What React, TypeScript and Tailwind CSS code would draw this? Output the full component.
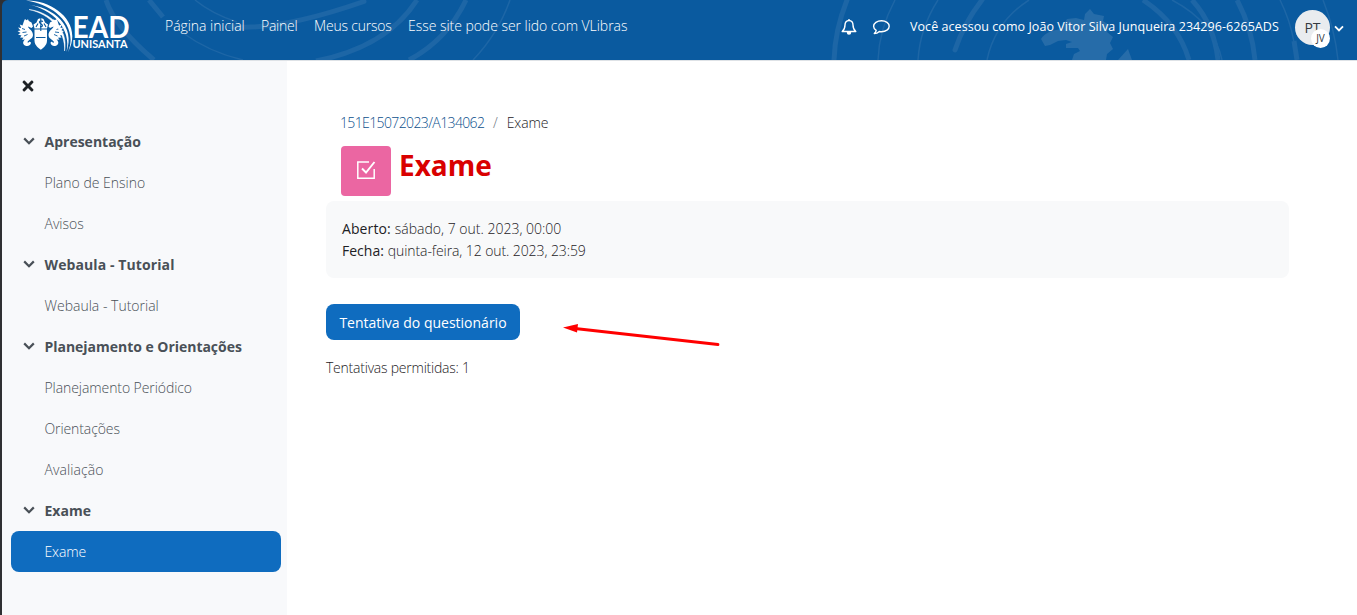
import type { ReactNode } from 'react';
import { FaTimes } from 'react-icons/fa';

function Chevron({ className }: { className: string }) {
  return (
    <svg viewBox="0 0 12 8" className={className} fill="none" stroke="currentColor" strokeWidth="2.2">
      <path d="M1.2 1.4 6 6.2l4.800-4.800" />
    </svg>
  );
}

function Seahorse() {
  return (
    <g>
      <path
        d="M22 21l1-2 1.500 1.200 1.500-1 .8 1.800 2.700 1.500 1.500 4-1.500 1.500-3.500-1.500c0 2 5 4 5 8.500 0 4-4.500 4.500-5.500 7 0 1 1.500 1 2-.5l1.500 1c0 3-3 4-5.500 3.200-3-1-3-4.200-.5-6.200l-3 .3 1.500-2-3.500-.3 1.500-2-3.500-1 2.500-1.500-3-2 3-.5-2.500-3 3.200.5-1.500-3.500 2.800 1z"
        fill="#fff"
      />
      <path d="M20 28.500l3 1M20.500 32.500l4-.5M22 36l3.500-1.500" stroke="#0a5a9f" strokeWidth=".9" />
    </g>
  );
}

function Logo() {
  return (
    <svg viewBox="0 0 130 60" className="h-[60px] w-[130px] shrink-0">
      <Seahorse />
      <g transform="translate(77.500 0) scale(-1 1)">
        <Seahorse />
      </g>
      <path d="M32.500 29.500h12.500v11c0 4-2.500 6.500-6.200 9.200-3.800-2.700-6.300-5.200-6.300-9.200z" fill="#fff" />
      <path d="M34 37.500h9.500" stroke="#0a5a9f" strokeWidth="1" />
      <path d="M32.500 28.500l-1-4 3-2 1.500-3.500 3-1 2.500 1 1.500 3.500 3 2-1 4z" fill="#fff" />
      <path d="M38.800 18v13M41 21.500c-3-1.500-5 .5-2.500 2s3 3-.5 3.500M34 27l2-3.500M44 27l-2-3.500" fill="none" stroke="#0a5a9f" strokeWidth="1.100" />
      <path d="M24 .5C50-.5 82 22 66 52 77 25 51 4 24 .5z" fill="#fff" />
      <path d="M25 4.500C52 7 74 26 64.500 52 70 29 50 8 25 4.500z" fill="#fff" />
      <path d="M27 9.500C48 12 67 29 62.500 51 64 31 48 14 27 9.500z" fill="#fff" stroke="#fff" strokeWidth=".5" />
      <text x="70.500" y="38" textLength="57" lengthAdjust="spacingAndGlyphs" className="fill-white font-['Lato'] text-[31px] font-bold">EAD</text>
      <text x="70.500" y="47.500" textLength="55" lengthAdjust="spacingAndGlyphs" className="fill-white font-['Lato'] text-[10.5px] font-bold">UNISANTA</text>
    </svg>
  );
}

function HeaderPattern() {
  return (
    <svg viewBox="0 0 1355 60" className="absolute inset-0 h-full w-full" fill="none" stroke="#1d66a6">
      <path d="M104 0q8 26 48 60M147 0l14 17" strokeWidth="5" />
      <path d="M228 26.500q48 5 134-25" strokeWidth="5" strokeLinecap="round" />
      <path d="M193 0q17 14 42 22M181 33q26 19 60 27" strokeWidth="1.500" />
      <path d="M415 0q-30 47-101 61M464 0q-19 40-57 60" strokeWidth="5" />
      <path d="M508 0q-12 34-37 60" strokeWidth="1.500" />
      <path d="M845 0q-12 30-13 60M980 0q-18 23-27 50" strokeWidth="5" strokeLinecap="round" />
      <path d="M893 0q-16 30-17 60M936 0q-18 28-20 60M1027 0q-34 22-42 60" strokeWidth="1.500" />
      <path d="M1141 0q35 23 46 60M1190 0q22 24 26 60M1235 0q15 28 18 60" strokeWidth="5" />
      <path d="M1170 0q42 22 50 60M1278 0q10 20 14 42M1321 0q12 30 15 60" strokeWidth="1.500" />
      <path d="M1292 41l3 19" strokeWidth="5" />
      <path d="M1039 39q3-5 10-8l10-2 6-10 9-1 8 2 1-6 5-5 4 5 10 2-1 5 6 4-2 7 6 5-3 6 3 6-6 5-1 6h-34l2-6 6-3-2-3-12 0 0-4 6-2-6-2-8 1-8 4-5 1z" fill="#266ca9" stroke="none" />
      <path d="M1116 60l10-11 4 11z" fill="#266ca9" stroke="none" />
    </svg>
  );
}

function Header() {
  return (
    <header className="relative h-[61px] shrink-0 overflow-hidden rounded-tl-md border-b border-[#dee2e6] bg-[#0a5a9f] text-white">
      <HeaderPattern />
      <div className="relative flex h-[60px] items-center">
        <Logo />
        <nav className="ml-[33px] flex -translate-y-[5px] gap-4 whitespace-nowrap text-[14px] font-[350]">
          <a className="w-[80px] tracking-[-0.05px]">Página inicial</a>
          <a className="w-[37px] tracking-[-0.25px]">Painel</a>
          <a className="w-[78px] tracking-[-0.2px]">Meus cursos</a>
          <a className="tracking-[-0.04px]">Esse site pode ser lido com VLibras</a>
        </nav>
        <div className="ml-auto flex -translate-y-[3px] items-center">
          <svg viewBox="0 0 16 16" className="h-4 w-4" fill="none" stroke="#fff" strokeWidth="1.400" strokeLinejoin="round">
            <path d="M8 1.500c-2.600 0-4 1.900-4 4.500 0 3.500-1 5-2.800 6.500h13.600C13 11 12 9.500 12 6c0-2.600-1.400-4.500-4-4.500zM8 0v1.500" />
            <path d="M6.500 13.500a1.500 1.500 0 0 0 3 0z" fill="#fff" />
          </svg>
          <svg viewBox="0 0 18 16" className="ml-[15px] h-4 w-[18px]" fill="none" stroke="#fff" strokeWidth="1.400" strokeLinejoin="round">
            <path d="M9.500 1.800C5.100 1.800 1.600 4.200 1.600 7.300c0 1.600 1 3.100 2.600 4.100-.2 1.200-.8 2.100-1.900 3.200 2.200 0 3.800-.9 5-2.100.7.100 1.400.2 2.200.2 4.400 0 7.700-2.400 7.700-5.400s-3.300-5.500-7.700-5.500z" />
          </svg>
          <span className="ml-5 w-[369px] whitespace-nowrap text-[12.5px] tracking-[0.06px]">Você acessou como João Vitor Silva Junqueira 234296-6265ADS</span>
          <div className="relative ml-4 flex h-[35px] w-[35px] items-center justify-center rounded-full bg-[#e9ecef] text-[14px] text-[#343a40]">
            PT
            <span className="absolute -bottom-[3px] right-0 flex h-[19px] w-[19px] items-center justify-center rounded-full bg-white text-[10px]">JV</span>
          </div>
          <Chevron className="ml-1 mr-[13px] h-[7px] w-[10px] translate-y-px" />
        </div>
      </div>
    </header>
  );
}

function Section({ title, children, tracking = '' }: { title: string; children: ReactNode; tracking?: string }) {
  return (
    <section>
      <div className="flex h-[41px] items-center pl-[11.5px] font-bold text-[#495057]">
        <Chevron className="mr-2.5 h-2 w-3 -translate-y-px" />
        <span className={tracking}>{title}</span>
      </div>
      {children}
    </section>
  );
}

function Item({ children, className = 'text-[#495057]' }: { children: ReactNode; className?: string }) {
  return <a className={`flex h-[41px] items-center rounded-lg pl-[33.5px] font-light ${className}`}>{children}</a>;
}

function Sidebar() {
  return (
    <aside className="w-[285px] shrink-0 bg-[#f8f9fb] pl-[9px] pr-1.5 text-[14px]">
      <div className="flex h-[60px] items-start pl-[9px] pt-[17px]">
        <FaTimes className="h-4 w-4 text-[#1d2125]" />
      </div>
      <Section title="Apresentação">
        <Item>Plano de Ensino</Item>
        <Item>Avisos</Item>
      </Section>
      <Section title="Webaula - Tutorial" tracking="tracking-[0.1px]">
        <Item>Webaula - Tutorial</Item>
      </Section>
      <Section title="Planejamento e Orientações" tracking="tracking-[-0.03px]">
        <Item className="tracking-[-0.08px] text-[#495057]">Planejamento Periódico</Item>
        <Item className="tracking-[-0.1px] text-[#495057]">Orientações</Item>
        <Item className="tracking-[0.1px] text-[#495057]">Avaliação</Item>
      </Section>
      <Section title="Exame">
        <Item className="bg-[#0f6cbf] tracking-[-0.15px] text-white">Exame</Item>
      </Section>
    </aside>
  );
}

function Main() {
  return (
    <main className="relative min-w-0 flex-1 pl-[39px] pr-[68px] pt-[50px] text-[14px] font-light text-[#1d2125]">
      <div className="flex h-[22px] items-center pl-[14px]">
        <a className="w-[144px] whitespace-nowrap tracking-[-0.62px] text-[#0b4f8c]">151E15072023/A134062</a>
        <span className="ml-[9px] mr-[9px] text-[#6c757d]">/</span>
        <span className="tracking-[-0.15px]">Exame</span>
      </div>
      <div className="mt-[13px] flex h-[50px] pl-[15px]">
        <div className="flex h-[50px] w-[50px] items-center justify-center rounded bg-[#eb66a2]">
          <svg viewBox="0 0 20 20" className="h-5 w-5 -translate-y-px" fill="none" stroke="#fff" strokeWidth="1.500">
            <path d="M13 2H1.800v16.200h16.400V9" />
            <path d="M6 8.500l4 4L18.500 2" strokeWidth="1.900" />
          </svg>
        </div>
        <h1 className="ml-2 text-[28px] font-bold leading-[38px] text-[#d90000]">Exame</h1>
      </div>
      <div className="mt-[5px] h-[77px] rounded-lg bg-[#f8f9fa] px-4 pt-[17px] leading-[22px]">
        <p><span className="mr-1 font-normal tracking-[0.1px]">Aberto:</span>sábado, 7 out. 2023, 00:00</p>
        <p><span className="mr-1 font-normal">Fecha:</span><span className="tracking-[-0.09px]">quinta-feira, 12 out. 2023, 23:59</span></p>
      </div>
      <button className="mt-[26px] flex h-9 w-[194px] items-center justify-center rounded-lg bg-[#0f6cbf] font-normal text-white">Tentativa do questionário</button>
      <p className="mt-[17px] leading-[22px] tracking-[-0.23px]">Tentativas permitidas: 1</p>
      <svg viewBox="0 0 160 26" className="absolute left-[274px] top-[260px] h-[26px] w-[160px]">
        <path d="M14 7.500l143 16" stroke="#f00" strokeWidth="2.800" strokeLinecap="round" />
        <path d="M2 6.500l15-3.500-1 8.500z" fill="#f00" />
      </svg>
    </main>
  );
}

export default function App() {
  return (
    <div className="flex h-[615px] w-full flex-col overflow-hidden border-l-2 border-[#2f3033] bg-[#2f3033] font-['Open_Sans','Noto_Sans',sans-serif]">
      <Header />
      <div className="flex flex-1 bg-white">
        <Sidebar />
        <Main />
      </div>
    </div>
  );
}
